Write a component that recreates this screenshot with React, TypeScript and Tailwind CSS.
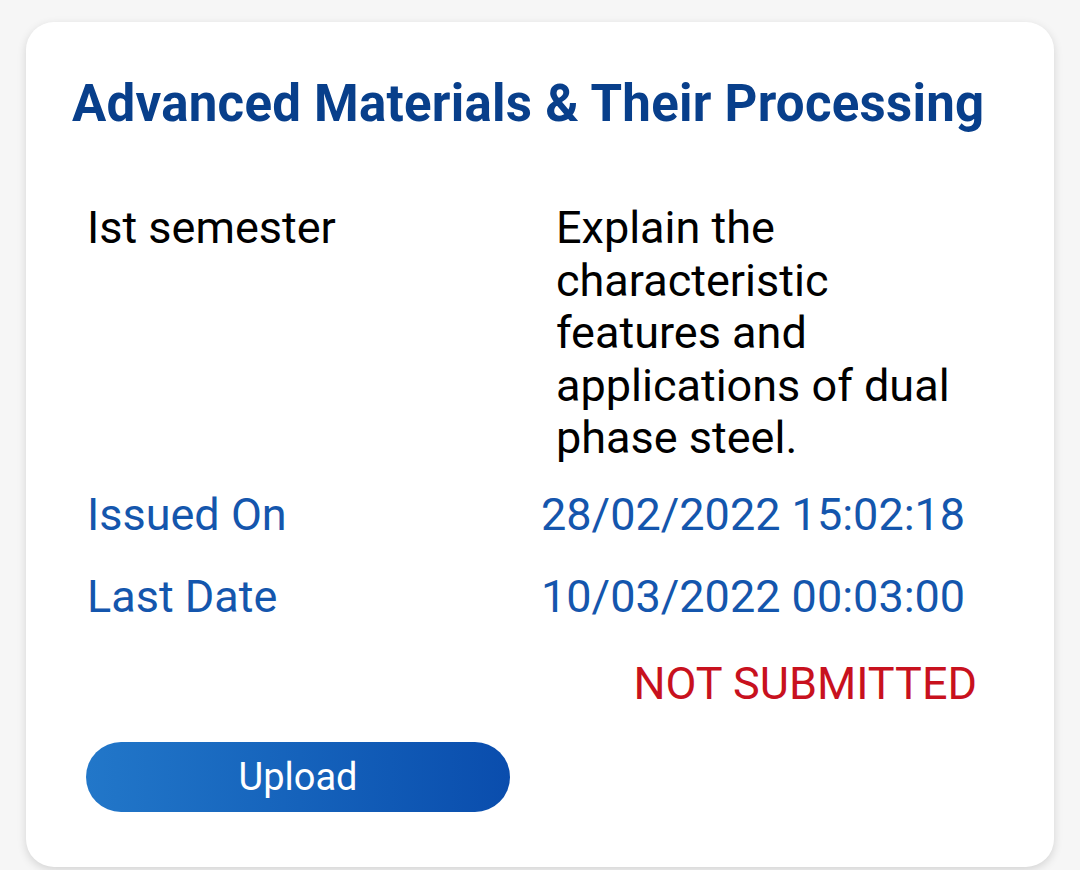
import React from "react";

export default function App() {
  return (
    <div className="min-h-screen bg-[#f6f6f6] px-[26px] pt-[22px] font-['Roboto',sans-serif] overflow-hidden h-[870px]">
      {/* Assignment card */}
      <div className="bg-white rounded-[28px] h-[845px] shadow-[0_3px_10px_rgba(0,0,0,0.14)] pl-[46px] pr-[77px] pt-[52px]">
        <h1 className="text-[51px] font-bold text-[#083f8b] leading-[60px] tracking-[0.25px] whitespace-nowrap">
          Advanced Materials &amp; Their Processing
        </h1>

        <div className="pl-[15px] mt-[68px] grid grid-cols-[454px_1fr] text-[45px] leading-[52.5px]">
          <div className="text-black">Ist semester</div>
          <div className="text-black pl-[15px]">
            Explain the characteristic features and applications of dual phase steel.
          </div>

          <div className="text-[#1456ad] mt-[24px]">Issued On</div>
          <div className="text-[#1456ad] mt-[24px]">28/02/2022 15:02:18</div>

          <div className="text-[#1456ad] mt-[29.5px]">Last Date</div>
          <div className="text-[#1456ad] mt-[29.5px]">10/03/2022 00:03:00</div>
        </div>

        <div className="text-right text-[45px] leading-[52.5px] text-[#c8111e] mt-[34.5px]">NOT SUBMITTED</div>

        <div className="pl-[14px] mt-[31.5px]">
          <button className="w-[424px] h-[70px] rounded-full bg-gradient-to-r from-[#2277c9] to-[#0a4dad] text-white text-[38px] leading-none">
            Upload
          </button>
        </div>
      </div>
    </div>
  );
}
